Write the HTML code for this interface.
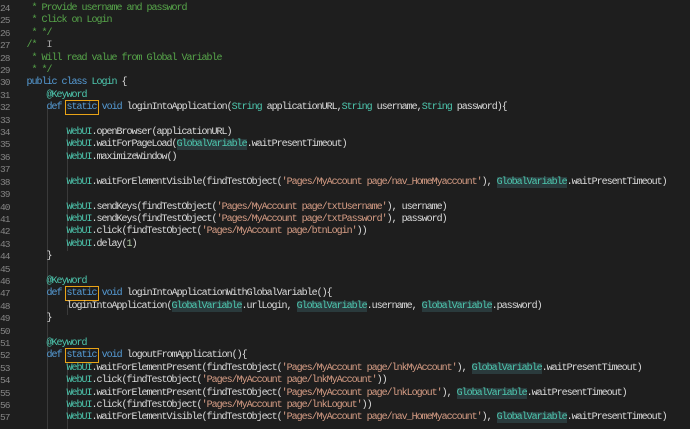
<!DOCTYPE html><html><head><meta charset="utf-8"><style>
body{margin:0;width:690px;height:428px;background:#1e1e1e;overflow:hidden;font-family:"Liberation Mono",monospace;}
.wrap{position:absolute;top:3px;left:0;}
.l{height:12.42px;line-height:12.42px;font-size:10px;letter-spacing:-1px;white-space:pre;color:#dcdcdc;position:relative}
.n{position:absolute;left:0;color:#858585;width:20px;font-size:9.5px}
.c{position:absolute;left:26.5px}
.cm{color:#57a64a}.k{color:#569cd6}.t{color:#4ec9b0}.s{color:#d69d85}
.g{color:#4ec9b0;background:#2a3a3c}
.box{outline:1.5px solid #e8a317;outline-offset:1px}
.guide{position:absolute;width:1px;background:#3a3a3a}
</style></head><body>
<div class="guide" style="left:47px;top:107px;height:322px"></div>
<div class="guide" style="left:67px;top:131px;height:120px"></div>
<div class="guide" style="left:67px;top:305px;height:10px"></div>
<div class="guide" style="left:67px;top:363px;height:66px"></div>
<div class="wrap">
<div class="l"><span class="n">24</span><span class="c cm"> * Provide username and password</span></div>
<div class="l"><span class="n">25</span><span class="c cm"> * Click on Login</span></div>
<div class="l"><span class="n">26</span><span class="c cm"> * */</span></div>
<div class="l"><span class="n">27</span><span class="c cm">/*  <span style="color:#aaa">I</span></span></div>
<div class="l"><span class="n">28</span><span class="c cm"> * Will read value from Global Variable</span></div>
<div class="l"><span class="n">29</span><span class="c cm"> * */</span></div>
<div class="l"><span class="n">30</span><span class="c"><span class="k">public class</span> <span class="t">Login</span> {</span></div>
<div class="l"><span class="n">31</span><span class="c">    <span class="t">@Keyword</span></span></div>
<div class="l"><span class="n">32</span><span class="c">    <span class="k">def</span> <span class="k box">static</span> <span class="k">void</span> loginIntoApplication(<span class="t">String</span> applicationURL,<span class="t">String</span> username,<span class="t">String</span> password){</span></div>
<div class="l"><span class="n">33</span><span class="c"></span></div>
<div class="l"><span class="n">34</span><span class="c">        <span class="t">WebUI</span>.openBrowser(applicationURL)</span></div>
<div class="l"><span class="n">35</span><span class="c">        <span class="t">WebUI</span>.waitForPageLoad(<span class="g">GlobalVariable</span>.waitPresentTimeout)</span></div>
<div class="l"><span class="n">36</span><span class="c">        <span class="t">WebUI</span>.maximizeWindow()</span></div>
<div class="l"><span class="n">37</span><span class="c"></span></div>
<div class="l"><span class="n">38</span><span class="c">        <span class="t">WebUI</span>.waitForElementVisible(findTestObject(<span class="s">'Pages/MyAccount page/nav_HomeMyaccount'</span>), <span class="g">GlobalVariable</span>.waitPresentTimeout)</span></div>
<div class="l"><span class="n">39</span><span class="c"></span></div>
<div class="l"><span class="n">40</span><span class="c">        <span class="t">WebUI</span>.sendKeys(findTestObject(<span class="s">'Pages/MyAccount page/txtUsername'</span>), username)</span></div>
<div class="l"><span class="n">41</span><span class="c">        <span class="t">WebUI</span>.sendKeys(findTestObject(<span class="s">'Pages/MyAccount page/txtPassword'</span>), password)</span></div>
<div class="l"><span class="n">42</span><span class="c">        <span class="t">WebUI</span>.click(findTestObject(<span class="s">'Pages/MyAccount page/btnLogin'</span>))</span></div>
<div class="l"><span class="n">43</span><span class="c">        <span class="t">WebUI</span>.delay(<span style="color:#b5cea8">1</span>)</span></div>
<div class="l"><span class="n">44</span><span class="c">    }</span></div>
<div class="l"><span class="n">45</span><span class="c"></span></div>
<div class="l"><span class="n">46</span><span class="c">    <span class="t">@Keyword</span></span></div>
<div class="l"><span class="n">47</span><span class="c">    <span class="k">def</span> <span class="k box">static</span> <span class="k">void</span> loginIntoApplicationWithGlobalVariable(){</span></div>
<div class="l"><span class="n">48</span><span class="c">        loginIntoApplication(<span class="g">GlobalVariable</span>.urlLogin, <span class="g">GlobalVariable</span>.username, <span class="g">GlobalVariable</span>.password)</span></div>
<div class="l"><span class="n">49</span><span class="c">    }</span></div>
<div class="l"><span class="n">50</span><span class="c"></span></div>
<div class="l"><span class="n">51</span><span class="c">    <span class="t">@Keyword</span></span></div>
<div class="l"><span class="n">52</span><span class="c">    <span class="k">def</span> <span class="k box">static</span> <span class="k">void</span> logoutFromApplication(){</span></div>
<div class="l"><span class="n">53</span><span class="c">        <span class="t">WebUI</span>.waitForElementPresent(findTestObject(<span class="s">'Pages/MyAccount page/lnkMyAccount'</span>), <span class="g">GlobalVariable</span>.waitPresentTimeout)</span></div>
<div class="l"><span class="n">54</span><span class="c">        <span class="t">WebUI</span>.click(findTestObject(<span class="s">'Pages/MyAccount page/lnkMyAccount'</span>))</span></div>
<div class="l"><span class="n">55</span><span class="c">        <span class="t">WebUI</span>.waitForElementPresent(findTestObject(<span class="s">'Pages/MyAccount page/lnkLogout'</span>), <span class="g">GlobalVariable</span>.waitPresentTimeout)</span></div>
<div class="l"><span class="n">56</span><span class="c">        <span class="t">WebUI</span>.click(findTestObject(<span class="s">'Pages/MyAccount page/lnkLogout'</span>))</span></div>
<div class="l"><span class="n">57</span><span class="c">        <span class="t">WebUI</span>.waitForElementVisible(findTestObject(<span class="s">'Pages/MyAccount page/nav_HomeMyaccount'</span>), <span class="g">GlobalVariable</span>.waitPresentTimeout)</span></div>
</div>
</body></html>
